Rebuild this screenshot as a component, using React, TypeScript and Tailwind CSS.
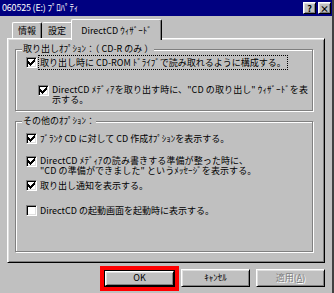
import React from "react";

const raised =
  "border border-t-white border-l-white border-r-black border-b-black shadow-[inset_1px_1px_0_#dfdfdf,inset_-1px_-1px_0_#808080]";

function CheckBox({ checked }: { checked: boolean }) {
  return (
    <span className="flex h-[11px] w-[11px] shrink-0 items-center justify-center border border-t-[#808080] border-l-[#808080] border-r-white border-b-white bg-white shadow-[inset_1px_1px_0_#000,inset_-1px_-1px_0_#dfdfdf]">
      {checked && (
        <svg width="7" height="7" viewBox="0 0 7 7" shapeRendering="crispEdges">
          <path d="M6 0h1v3h-1v1h-1v1h-1v1h-1v1h-1v-1h-1v-1h-1v-3h1v1h1v1h1v-1h1v-1h1z" fill="#000" />
        </svg>
      )}
    </span>
  );
}

function Group({ label, children, className }: { label: string; children: React.ReactNode; className?: string }) {
  return (
    <div
      className={
        "relative border border-[#808080] shadow-[1px_1px_0_#fff,inset_1px_1px_0_#fff] " + (className ?? "")
      }
    >
      <span className="absolute left-[6px] top-[-7px] bg-[#c0c0c0] px-[1px] leading-[12px]">{label}</span>
      {children}
    </div>
  );
}

export default function App() {
  return (
    <div className="flex h-[293px] w-[334px] flex-col overflow-hidden border-r-2 border-r-[#404040] bg-[#c0c0c0] font-['Noto_Sans_CJK_JP',sans-serif] text-[9px] leading-[10px] text-black">
      {/* title bar */}
      <div className="flex h-[16px] shrink-0 items-center bg-[#000080] pl-[2px] pr-[1px] text-white">
        <span className="flex-1 text-[9px] tracking-[-0.2px]">060525 (E:) ﾌﾟﾛﾊﾟﾃｨ</span>
        <div className="flex gap-[2px]">
          <button className={"flex h-[12px] w-[13px] items-center justify-center bg-[#c0c0c0] text-[9px] font-bold leading-none text-black " + raised}>
            ?
          </button>
          <button className={"flex h-[12px] w-[13px] items-center justify-center bg-[#c0c0c0] text-[9px] font-bold leading-none text-black " + raised}>
            ×
          </button>
        </div>
      </div>

      <div className="flex flex-1 flex-col px-[7px]">
        {/* tabs */}
        <div className="mt-[3px] flex h-[19px] items-end pl-[5px]">
          <div className="flex h-[16px] w-[30px] items-center justify-center rounded-t-[2px] border-l border-t border-r border-l-white border-t-white border-r-black pt-[1px] shadow-[inset_-1px_0_0_#808080]">
            情報
          </div>
          <div className="flex h-[16px] w-[31px] items-center justify-center rounded-t-[2px] border-t border-r border-t-white border-r-black pt-[1px] shadow-[inset_-1px_0_0_#808080]">
            設定
          </div>
          <div className="relative z-10 -mb-[2px] -ml-[2px] flex h-[21px] w-[91px] items-start justify-center rounded-t-[2px] border-l border-t border-r border-l-white border-t-white border-r-black bg-[#c0c0c0] pt-[6px] shadow-[inset_-1px_0_0_#808080]">
            DirectCD ｳｨｻﾞｰﾄﾞ
          </div>
        </div>

        {/* panel */}
        <div className="flex h-[225px] flex-col border border-t-white border-l-white border-r-black border-b-black pl-[7px] pr-[11px] shadow-[inset_1px_1px_0_#dfdfdf,inset_-1px_-1px_0_#808080]">
          <Group label="取り出しｵﾌﾟｼｮﾝ：（ CD-R のみ ）" className="mt-[10px] h-[62px]">
            <div className="flex flex-col pl-[10px] pt-[5px]">
              <div className="flex h-[15px] items-center">
                <CheckBox checked />
                <span className="ml-[1px] border border-dotted border-black px-[1px] leading-[13px]">
                  取り出し時に CD-ROM ﾄﾞﾗｲﾌﾞで読み取れるように構成する。
                </span>
              </div>
              <div className="mt-[15px] flex items-start pl-[12px]">
                <CheckBox checked />
                <span className="ml-[3px] tracking-[0.1px]">
                  DirectCD ﾒﾃﾞｨｱを取り出す時に、"CD の取り出し" ｳｨｻﾞｰﾄﾞを表
                  <br />
                  示する。
                </span>
              </div>
            </div>
          </Group>

          <Group label="その他のｵﾌﾟｼｮﾝ：" className="mt-[10px] h-[131px]">
            <div className="flex flex-col pl-[10px] pt-[11px]">
              <div className="flex items-center">
                <CheckBox checked />
                <span className="ml-[3px]">ﾌﾞﾗﾝｸ CD に対して CD 作成ｵﾌﾟｼｮﾝを表示する。</span>
              </div>
              <div className="mt-[12px] flex items-start">
                <CheckBox checked />
                <span className="ml-[3px] tracking-[0.1px]">
                  DirectCD ﾒﾃﾞｨｱの読み書きする準備が整った時に、
                  <br />
                  "CD の準備ができました" というﾒｯｾｰｼﾞを表示する。
                </span>
              </div>
              <div className="mt-[4px] flex items-center">
                <CheckBox checked />
                <span className="ml-[3px]">取り出し通知を表示する。</span>
              </div>
              <div className="mt-[14px] flex items-center">
                <CheckBox checked={false} />
                <span className="ml-[3px]">DirectCD の起動画面を起動時に表示する。</span>
              </div>
            </div>
          </Group>
        </div>

        {/* buttons */}
        <div className="flex flex-1 items-center justify-end">
          <div className="flex h-[25px] w-[79px] border-4 border-[#ff0000]">
            <button className="flex flex-1 border border-black">
              <span className={"flex flex-1 items-center justify-center " + raised}>OK</span>
            </button>
          </div>
          <button className={"ml-[2px] flex h-[18px] w-[69px] items-center justify-center " + raised}>ｷｬﾝｾﾙ</button>
          <button
            className={"ml-[6px] flex h-[18px] w-[69px] items-center justify-center text-[#808080] [text-shadow:1px_1px_0_#fff] " + raised}
          >
            適用(<span className="underline">A</span>)
          </button>
        </div>
      </div>
    </div>
  );
}
